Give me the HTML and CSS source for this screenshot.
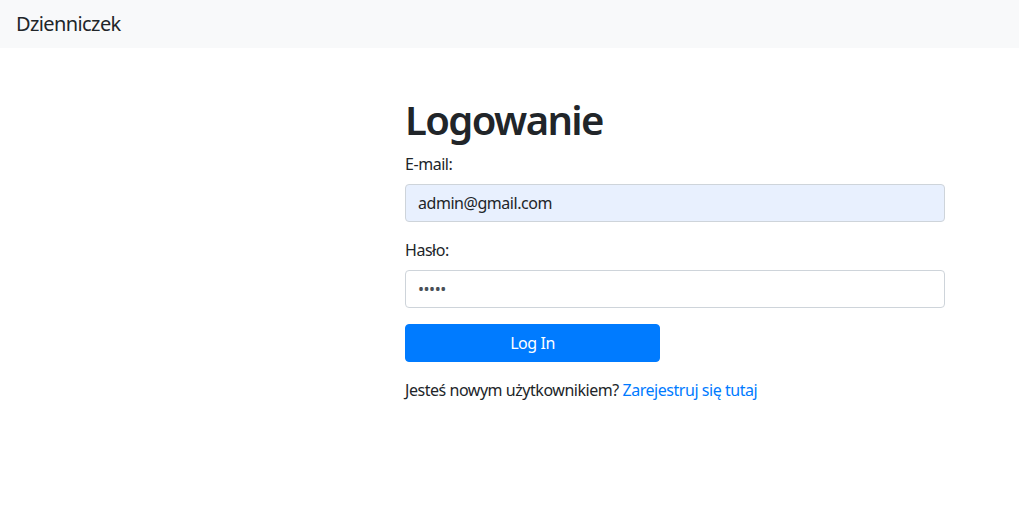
FILE: index.html
```html
<!DOCTYPE html>
<html lang="pl">
<head>
<meta charset="utf-8">
<title>Dziennicze</title>
<link rel="stylesheet" href="styles.css">
</head>
<body>
<nav class="navbar"><span class="brand">Dzienniczek</span></nav>
<main class="content">
  <form class="login">
    <h1 class="title">Logowanie</h1>
    <div class="group">
      <label class="label" for="email">E-mail:</label>
      <input class="input input-filled" id="email" type="text" value="admin@gmail.com">
    </div>
    <div class="group">
      <label class="label" for="pass">Hasło:</label>
      <input class="input" id="pass" type="password" value="admin">
    </div>
    <button class="btn" type="button">Log In</button>
    <p class="note">Jesteś nowym użytkownikiem? <a class="link" href="#">Zarejestruj się tutaj</a></p>
  </form>
</main>
</body>
</html>
```
FILE: styles.css
```css
* { box-sizing: border-box; }
html, body { margin: 0; padding: 0; }
body {
  font-family: "Noto Sans", "Open Sans", sans-serif;
  font-size: 16px;
  line-height: 1.5;
  letter-spacing: -0.46px;
  color: #212529;
  background: #fff;
}
.navbar {
  height: 48px;
  background: #f8f9fa;
  display: flex;
  align-items: center;
  padding: 0 16px;
}
.brand { font-size: 20px; line-height: 30px; letter-spacing: -0.6px; }
.content { padding-left: 405px; padding-top: 48px; }
.login { width: 540px; }
.title {
  margin: 0 0 8px;
  font-size: 40px;
  font-weight: 600;
  line-height: 1.2;
  letter-spacing: -1.6px;
}
.group { margin-bottom: 16px; }
.label { display: block; margin-bottom: 8px; }
.input {
  display: block;
  width: 100%;
  height: 38px;
  padding: 6px 12px;
  font: inherit;
  letter-spacing: inherit;
  color: #495057;
  background: #fff;
  border: 1px solid #ced4da;
  border-radius: 4px;
}
.input-filled { background: #e8f0fe; color: #212529; }
.btn {
  display: block;
  width: 255px;
  height: 38px;
  font: inherit;
  letter-spacing: inherit;
  color: #fff;
  background: #007bff;
  border: 1px solid #007bff;
  border-radius: 4px;
  margin-bottom: 16px;
}
.note { margin: 0; }
.link { color: #007bff; text-decoration: none; }
```
